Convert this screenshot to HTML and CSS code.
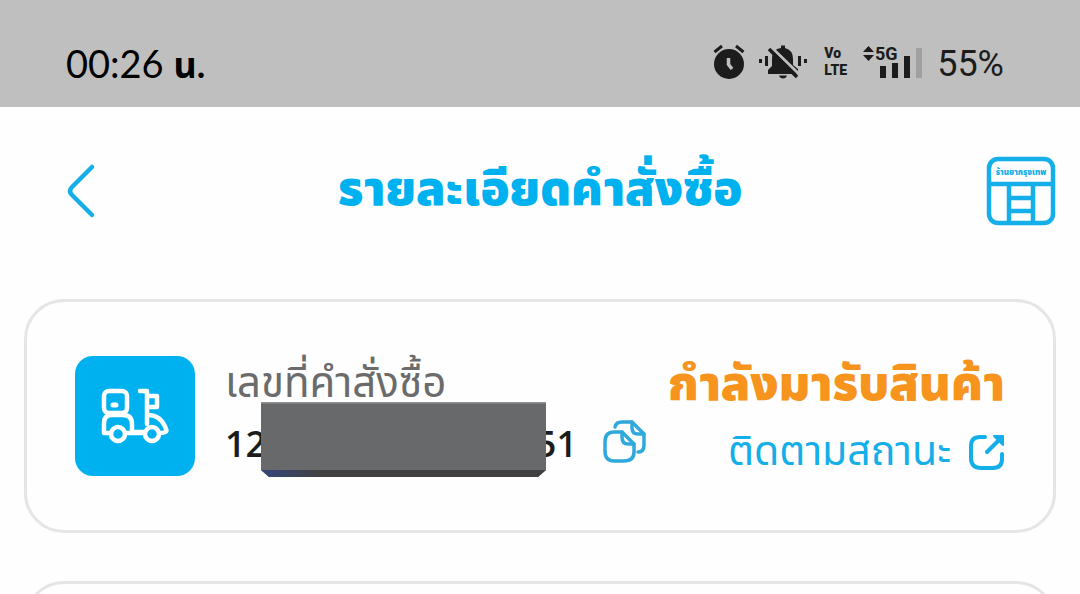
FILE: index.html
```html
<!DOCTYPE html>
<html lang="th">
<head>
  <meta charset="UTF-8" />
  <meta name="viewport" content="width=device-width, initial-scale=1.0"/>
  <title>รายละเอียดคำสั่งซื้อ</title>
  <link rel="stylesheet" href="styles.css">
</head>
<body>

  <div class="status-bar">
    <span class="clock">00:26 <b>น.</b></span>
    <div class="status-icons">
      <svg class="alarm" width="32" height="36" viewBox="0 0 32 36" aria-hidden="true">
        <circle cx="16" cy="20" r="15" fill="#1c1c1c"/>
        <path d="M1.500 8 L9 2 M30.500 8 L23 2" fill="none" stroke="#1c1c1c" stroke-width="3"/>
        <path d="M15.500 14 V20.500 L19 25" fill="none" stroke="#bfbfbf" stroke-width="3.500"/>
      </svg>
      <svg class="mute" width="48" height="36" viewBox="0 0 48 36" aria-hidden="true">
        <path d="M9 30 V26 L13 22 V15 Q13 5 22 4 V1.500 H26 V4 Q34 6 34 15 V21 L39 25 V30 Z M20 31.500 H28 Q27 34.500 24 34.500 Q21 34.500 20 31.500Z" fill="#1c1c1c"/>
        <path d="M9 0 L42 32" stroke="#bfbfbf" stroke-width="3"/>
        <path d="M10 5 L38 33" stroke="#1c1c1c" stroke-width="3.500"/>
        <path d="M1.500 15 V19 M7.500 12 V22 M40.500 12 V22 M46.500 15 V19" stroke="#1c1c1c" stroke-width="3"/>
      </svg>
      <span class="volte"><span>Vo</span><span>LTE</span></span>
      <svg class="signal" width="60" height="36" viewBox="0 0 60 36" aria-hidden="true">
        <path d="M0 8 L5.500 2 L11 8 Z M0 11 H11 L5.500 17 Z" fill="#1c1c1c"/>
        <text x="12" y="16">5G</text>
        <path d="M17 22 H23 V34 H17 Z M29 19 H35 V34 H29 Z M41 12 H47 V34 H41 Z" fill="#1c1c1c"/>
        <path d="M53 4 H59 V34 H53 Z" fill="#a0a0a0"/>
      </svg>
      <span class="battery">55%</span>
    </div>
  </div>

  <header class="nav">
    <button class="back" aria-label="ย้อนกลับ">
      <svg width="30" height="54" viewBox="0 0 30 54">
        <path d="M26 3 L6 23 Q2 27 6 31 L26 51" fill="none" stroke="#14aee8" stroke-width="4.500" stroke-linecap="round"/>
      </svg>
    </button>
    <h1>รายละเอียดคำสั่งซื้อ</h1>
    <a class="store" href="#" aria-label="ร้านยากรุงเทพ">
      <svg width="70" height="70" viewBox="0 0 70 70">
        <rect x="3" y="3" width="64" height="64" rx="9" fill="none" stroke="#14aee8" stroke-width="4.500"/>
        <path d="M3 28 H67 M23 28 V67 M47 28 V67 M23 42 H47 M23 55 H47" fill="none" stroke="#14aee8" stroke-width="4.500"/>
        <text x="35" y="19" text-anchor="middle">ร้านยากรุงเทพ</text>
      </svg>
    </a>
  </header>

  <main class="orders">
    <section class="card">
      <div class="order-icon">
        <svg width="68" height="56" viewBox="0 0 68 56" fill="none" stroke="#fff" stroke-width="4.500" stroke-linecap="round" stroke-linejoin="round" aria-hidden="true">
          <rect x="3" y="3" width="23" height="22" rx="5"/>
          <path d="M12 17 H15" stroke-width="5"/>
          <path d="M10 45 H3 V35 Q3 27 11 27 H22 Q31 27 31 36 V44 H42"/>
          <path d="M24 45 H42 M39 3 H46 V36"/>
          <path d="M47 8 H56 V19 H47"/>
          <path d="M47 27 Q60 27 65 41 Q67 45 59 45"/>
          <circle cx="17" cy="46" r="7"/>
          <circle cx="51" cy="46" r="7"/>
        </svg>
      </div>
      <div class="order-info">
        <p class="label">เลขที่คำสั่งซื้อ</p>
        <div class="number-row">
          <span class="number"><span>12</span><span>51</span><span class="mask"></span></span>
          <button class="copy" aria-label="คัดลอก">
            <svg width="44" height="44" viewBox="0 0 44 44" fill="none" stroke="#2fa9dc" stroke-width="3.500" stroke-linecap="round" stroke-linejoin="round">
              <path d="M20 12 H12 Q3 12 3 22 V31 Q3 41 12 41 H22 Q32 41 32 32 V24 Z"/>
              <path d="M20 12 V17 Q20 24 26 24 H32"/>
              <path d="M13 7 Q14 2 20 2 H30 L42 14 V25 Q42 32 36 32"/>
              <path d="M30 2 V8 Q30 14 36 14 H42"/>
            </svg>
          </button>
        </div>
      </div>
      <div class="order-status">
        <strong>กำลังมารับสินค้า</strong>
        <a class="track" href="#">
          ติดตามสถานะ
          <svg width="36" height="36" viewBox="0 0 36 36" fill="none" stroke="#14aee8" stroke-width="4" stroke-linecap="round" stroke-linejoin="round" aria-hidden="true">
            <path d="M16 3 H11 Q2 3 2 12 V24 Q2 34 12 34 H24 Q33 34 33 25 V20"/>
            <path d="M18 18 L31 5"/>
            <path d="M25 2 H34 V11 Z" fill="#14aee8" stroke-width="2"/>
          </svg>
        </a>
      </div>
    </section>

    <section class="card"></section>
  </main>

</body>
</html>
```
FILE: styles.css
```css
* {
  box-sizing: border-box;
}

body {
  margin: 0;
  height: 100vh;
  overflow: hidden;
  background: #fefefe;
  font-family: "Noto Sans Thai", "Prompt", "Kanit", "Noto Sans", sans-serif;
}

button {
  padding: 0;
  border: none;
  background: none;
  cursor: pointer;
}

svg {
  display: block;
  overflow: visible;
}

.status-bar {
  display: flex;
  justify-content: space-between;
  align-items: center;
  height: 107px;
  padding: 20px 76px 0 66px;
  background: #bfbfbf;
}

.clock {
  font: 38px/48px Lato, "Noto Sans Thai", sans-serif;
  color: #000;
}

.clock b {
  font-size: 36px;
}

.status-icons {
  display: flex;
  align-items: center;
  color: #1c1c1c;
}

.status-icons svg {
  margin-bottom: 4px;
}

.mute {
  margin-left: 14px;
}

.volte {
  display: flex;
  flex-direction: column;
  margin: 0 16px 4px 17px;
  font: 900 14px/17px Roboto, sans-serif;
}

.signal text {
  font: bold 18px Roboto, sans-serif;
  fill: #1c1c1c;
}

.battery {
  margin-left: 14px;
  font: 36px/48px Roboto, sans-serif;
}

.nav {
  display: grid;
  grid-template-columns: 1fr auto 1fr;
  align-items: center;
  height: 168px;
  padding: 0 24px;
}

.back {
  justify-self: start;
  margin-left: 42px;
}

.nav h1 {
  margin: 0;
  font-size: 48px;
  font-weight: 900;
  line-height: 64px;
  color: #00b1f0;
}

.store {
  justify-self: end;
}

.store text {
  font-size: 8px;
  font-weight: 900;
  fill: #14aee8;
}

.orders {
  display: flex;
  flex-direction: column;
  gap: 48px;
  padding: 24px;
}

.card {
  display: flex;
  align-items: center;
  min-height: 234px;
  padding: 0 48px;
  border: 3px solid #e5e5e5;
  border-radius: 40px;
}

.order-icon {
  display: flex;
  align-items: center;
  justify-content: center;
  width: 120px;
  height: 120px;
  border-radius: 18px;
  background: #00b1f0;
}

.order-info {
  margin-left: 30px;
  padding-bottom: 4px;
}

.label {
  margin: 0;
  font-size: 42px;
  line-height: 56px;
  color: #6b6b6b;
}

.number-row {
  display: flex;
  align-items: center;
  gap: 25px;
}

.number {
  position: relative;
  display: flex;
  justify-content: space-between;
  width: 352px;
  padding-top: 4px;
  font: 600 36px/56px "Open Sans", sans-serif;
  color: #1c1c1c;
}

/* covers the middle digits of the order number */
.mask {
  position: absolute;
  top: -10px;
  left: 36px;
  width: 285px;
  height: 75px;
  background:
    linear-gradient(90deg, #35467c, #414142 60px) 0 100% / 100% 7px no-repeat,
    linear-gradient(#909192 0 1px, #68696b 2px);
  clip-path: polygon(0 0, 100% 0, 100% 68px, 277px 100%, 8px 100%, 0 68px);
}

.order-status {
  display: flex;
  flex-direction: column;
  align-items: flex-end;
  margin-left: auto;
  padding-top: 6px;
}

.order-status strong {
  font-size: 48px;
  font-weight: 900;
  line-height: 66px;
  color: #f7941d;
}

.track {
  display: flex;
  align-items: center;
  gap: 18px;
  font-size: 41px;
  line-height: 66px;
  color: #14aee8;
  text-decoration: none;
}
```
